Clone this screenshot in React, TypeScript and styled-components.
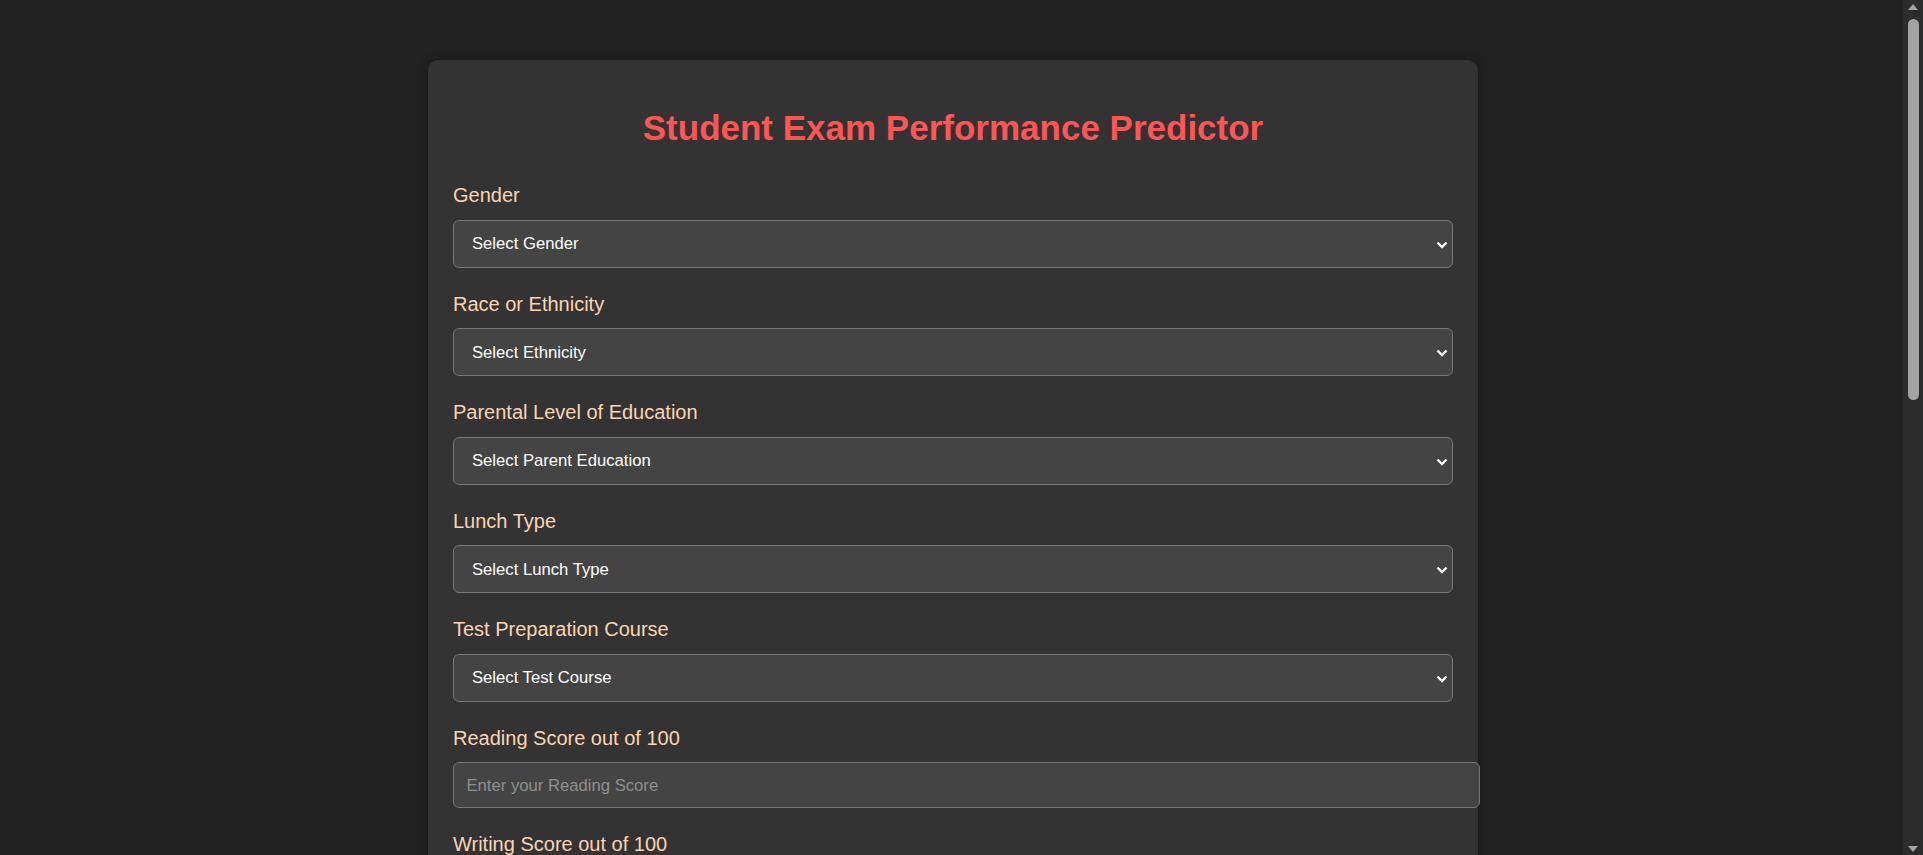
import React from "react";
import styled, { createGlobalStyle } from "styled-components";

const GlobalStyle = createGlobalStyle`
  html {
    background: #222222;
  }
  body {
    margin: 0;
    background: #222222;
    font-family: "Liberation Sans", Arial, sans-serif;
  }
  * {
    font-family: "Liberation Sans", Arial, sans-serif;
  }
`;

const Page = styled.main`
  padding: 60px 17px 60px 0;
`;

const Card = styled.section`
  width: 1000px;
  margin: 0 auto;
  padding: 25px;
  background: #333333;
  border-radius: 10px;
  box-shadow: 0 0 10px rgba(0, 0, 0, 0.35);
`;

const Title = styled.h1`
  margin: 23px 0 36px;
  text-align: center;
  color: #ff5555;
  font-size: 35px;
  font-weight: 700;
  line-height: 40.25px;
`;

const Form = styled.form`
  display: block;
`;

const Field = styled.div`
  margin-bottom: 25px;
`;

const Label = styled.label`
  display: block;
  margin-bottom: 12.5px;
  color: #fdd4b0;
  font-size: 20px;
  line-height: 23px;
`;

const SelectWrap = styled.div`
  position: relative;
`;

const Select = styled.select`
  display: block;
  box-sizing: border-box;
  width: 100%;
  height: 48px;
  padding: 0 30px 0 18px;
  background: #444444;
  color: #ffffff;
  border: 1px solid #777777;
  border-radius: 6px;
  font-size: 16.67px;
  outline: none;
  appearance: none;
  -webkit-appearance: none;
`;

const Chevron = styled.svg`
  position: absolute;
  right: 5px;
  top: 50%;
  width: 12px;
  height: 8px;
  margin-top: -3px;
  pointer-events: none;
`;

const Input = styled.input`
  display: block;
  width: 100%;
  height: 19px;
  padding: 12.5px 12.5px;
  background: #444444;
  color: #ffffff;
  border: 1px solid #777777;
  border-radius: 6px;
  font-size: 16.67px;
  line-height: 19px;
  outline: none;

  &::placeholder {
    color: #8f8f8f;
  }
`;

const SubmitButton = styled.button`
  display: block;
  width: 100%;
  height: 48px;
  margin-top: 10px;
  background: #ff5555;
  color: #ffffff;
  border: none;
  border-radius: 6px;
  font-size: 20px;
  font-weight: 700;
  cursor: pointer;
`;

const ScrollTrack = styled.div`
  position: fixed;
  top: 0;
  right: 0;
  bottom: 0;
  width: 20px;
  background: #2c2c2c;
  display: flex;
  flex-direction: column;
  align-items: center;
  padding: 4px 0 3px;
  box-sizing: border-box;
`;

const Arrow = styled.div<{ $down?: boolean }>`
  width: 0;
  height: 0;
  border-left: 5px solid transparent;
  border-right: 5px solid transparent;
  ${(p) => (p.$down ? "border-top: 6px solid #a3a3a3;" : "border-bottom: 6px solid #a3a3a3;")}
`;

const Thumb = styled.div`
  width: 11px;
  height: 381px;
  margin-top: 9px;
  border-radius: 5.5px;
  background: #a3a3a3;
`;

const Spacer = styled.div`
  flex: 1;
`;

type SelectField = {
  id: string;
  label: string;
  placeholder: string;
  options: string[];
};

const selectFields: SelectField[] = [
  { id: "gender", label: "Gender", placeholder: "Select Gender", options: ["male", "female"] },
  {
    id: "ethnicity",
    label: "Race or Ethnicity",
    placeholder: "Select Ethnicity",
    options: ["group A", "group B", "group C", "group D", "group E"],
  },
  {
    id: "parental_level_of_education",
    label: "Parental Level of Education",
    placeholder: "Select Parent Education",
    options: [
      "associate's degree",
      "bachelor's degree",
      "high school",
      "master's degree",
      "some college",
      "some high school",
    ],
  },
  { id: "lunch", label: "Lunch Type", placeholder: "Select Lunch Type", options: ["free/reduced", "standard"] },
  {
    id: "test_preparation_course",
    label: "Test Preparation Course",
    placeholder: "Select Test Course",
    options: ["none", "completed"],
  },
];

const scoreFields = [
  { id: "reading_score", label: "Reading Score out of 100", placeholder: "Enter your Reading Score" },
  { id: "writing_score", label: "Writing Score out of 100", placeholder: "Enter your Writing Score" },
];

export default function App() {
  return (
    <>
      <GlobalStyle />
      <Page>
        <Card>
          <Title>Student Exam Performance Predictor</Title>
          <Form onSubmit={(e) => e.preventDefault()}>
            {selectFields.map((f) => (
              <Field key={f.id}>
                <Label htmlFor={f.id}>{f.label}</Label>
                <SelectWrap>
                  <Select id={f.id} name={f.id} defaultValue="">
                    <option value="" disabled>
                      {f.placeholder}
                    </option>
                    {f.options.map((o) => (
                      <option key={o} value={o}>
                        {o}
                      </option>
                    ))}
                  </Select>
                  <Chevron viewBox="0 0 12 8" aria-hidden="true">
                    <polyline
                      points="1.5,1.5 6,6 10.5,1.5"
                      fill="none"
                      stroke="#ffffff"
                      strokeWidth="2.3"
                      strokeLinejoin="miter"
                      strokeLinecap="butt"
                    />
                  </Chevron>
                </SelectWrap>
              </Field>
            ))}
            {scoreFields.map((f) => (
              <Field key={f.id}>
                <Label htmlFor={f.id}>{f.label}</Label>
                <Input id={f.id} name={f.id} type="number" min={0} max={100} placeholder={f.placeholder} />
              </Field>
            ))}
            <SubmitButton type="submit">Predict your Maths Score</SubmitButton>
          </Form>
        </Card>
      </Page>
      <ScrollTrack aria-hidden="true">
        <Arrow />
        <Thumb />
        <Spacer />
        <Arrow $down />
      </ScrollTrack>
    </>
  );
}
